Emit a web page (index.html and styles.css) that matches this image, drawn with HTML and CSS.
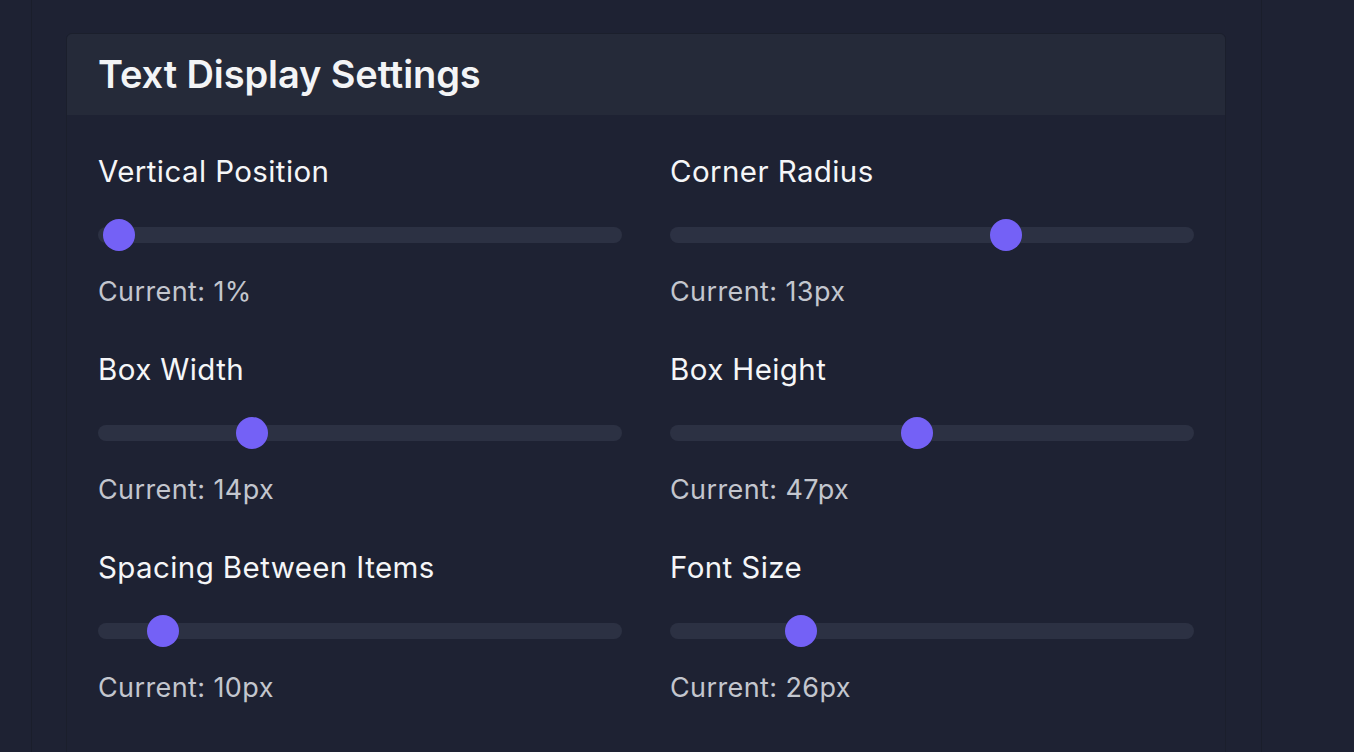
FILE: index.html
```html
<!DOCTYPE html>
<html lang="en">
<head>
<meta charset="utf-8">
<title>Text Display Settings</title>
<link rel="stylesheet" href="styles.css">
</head>
<body>
<div class="shell">
  <section class="card">
    <header class="card-header">
      <h1 class="card-title">Text Display Settings</h1>
    </header>
    <div class="card-body">
      <div class="field">
        <label class="field-label" for="vpos">Vertical Position</label>
        <input class="slider" id="vpos" type="range" min="0" max="100" value="1">
        <div class="field-value">Current: 1%</div>
      </div>
      <div class="field">
        <label class="field-label" for="radius">Corner Radius</label>
        <input class="slider" id="radius" type="range" min="0" max="20" value="13">
        <div class="field-value">Current: 13px</div>
      </div>
      <div class="field">
        <label class="field-label" for="bwidth">Box Width</label>
        <input class="slider" id="bwidth" type="range" min="0" max="50" value="14">
        <div class="field-value">Current: 14px</div>
      </div>
      <div class="field">
        <label class="field-label" for="bheight">Box Height</label>
        <input class="slider" id="bheight" type="range" min="0" max="100" value="47">
        <div class="field-value">Current: 47px</div>
      </div>
      <div class="field">
        <label class="field-label" for="spacing">Spacing Between Items</label>
        <input class="slider" id="spacing" type="range" min="0" max="100" value="10">
        <div class="field-value">Current: 10px</div>
      </div>
      <div class="field">
        <label class="field-label" for="fsize">Font Size</label>
        <input class="slider" id="fsize" type="range" min="12" max="72" value="26">
        <div class="field-value">Current: 26px</div>
      </div>
    </div>
  </section>
</div>
</body>
</html>
```
FILE: styles.css
```css
* { box-sizing: border-box; }

html, body {
  margin: 0;
  padding: 0;
  background: #1e2233;
  font-family: "Inter", "Noto Sans", "Liberation Sans", sans-serif;
  overflow: hidden;
}

.shell {
  margin-left: 31px;
  width: 1231px;
  min-height: 752px;
  border-left: 1px solid #1a1e2b;
  border-right: 1px solid #1a1e2b;
  padding: 33px 35px 0 34px;
}

.card {
  border: 1px solid #1b1f2c;
  border-radius: 6px;
  background: #1e2233;
  overflow: hidden;
  min-height: 740px;
}

.card-header {
  background: #252a39;
  padding: 0 31px;
  height: 81px;
  display: flex;
  align-items: center;
}

.card-title {
  margin: 0;
  font-size: 38px;
  font-weight: 600;
  color: #f3f4f6;
  letter-spacing: -0.1px;
  position: relative;
  top: -1px;
}

.card-body {
  padding: 32px 31px;
  display: grid;
  grid-template-columns: 1fr 1fr;
  column-gap: 48px;
  row-gap: 33px;
}

.field {
  display: flex;
  flex-direction: column;
}

.field-label {
  font-size: 29.5px;
  line-height: 42px;
  letter-spacing: 0.4px;
  color: #f5f6f8;
  padding-top: 3px;
  margin-bottom: 27px;
}

.field-value {
  font-size: 27px;
  line-height: 39px;
  letter-spacing: 0.4px;
  color: #c3c6ce;
  margin-top: 21px;
  margin-bottom: 1px;
}

.slider {
  -webkit-appearance: none;
  appearance: none;
  width: 100%;
  height: 32px;
  margin: 0;
  background: transparent;
  outline: none;
}

.slider::-webkit-slider-runnable-track {
  height: 16px;
  border-radius: 8px;
  background: #2c3143;
}

.slider::-webkit-slider-thumb {
  -webkit-appearance: none;
  appearance: none;
  width: 32px;
  height: 32px;
  border-radius: 50%;
  background: #7461f6;
  border: none;
  margin-top: -8px;
}
```
